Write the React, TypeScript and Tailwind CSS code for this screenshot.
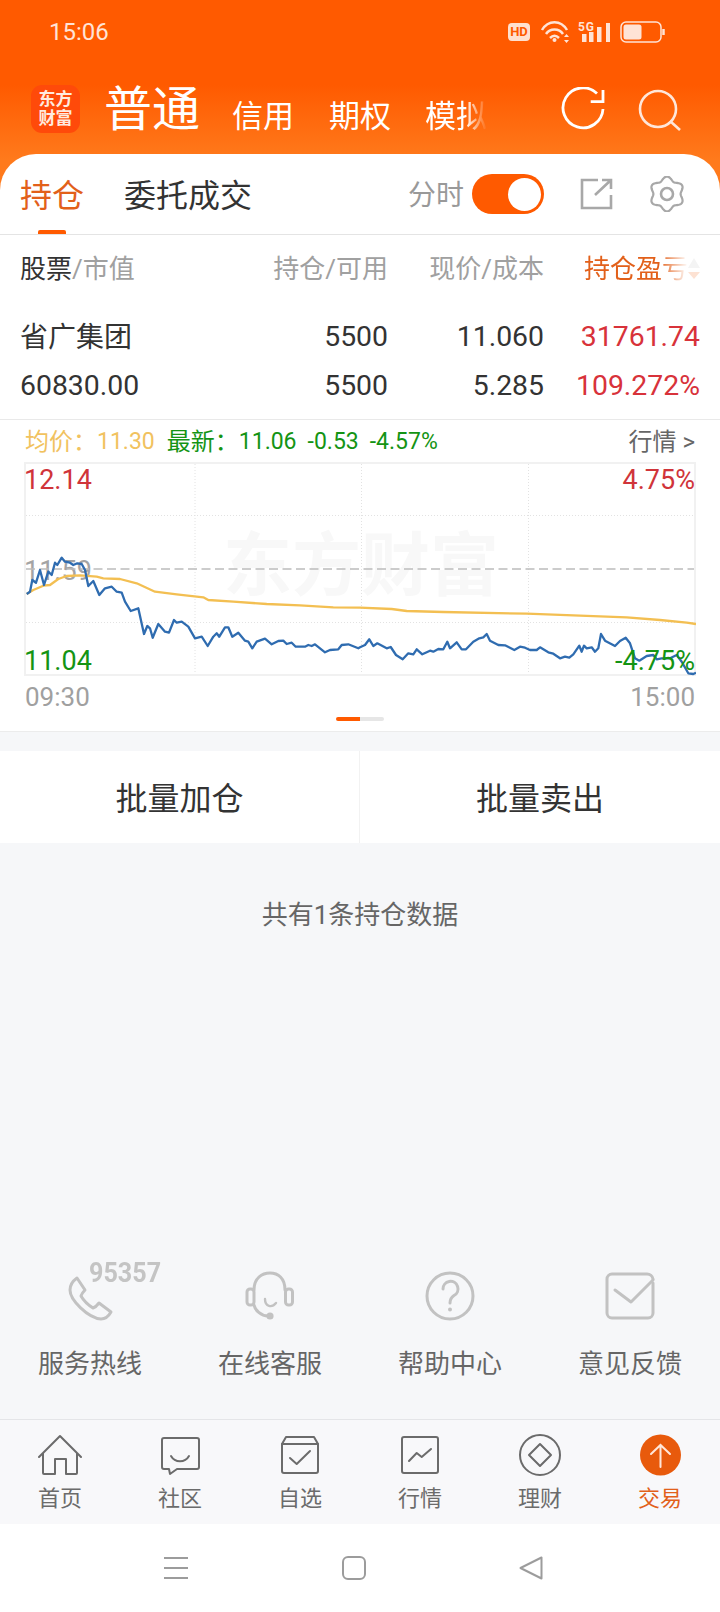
import React from "react";

const blue: number[][] = [[80,552],[90,545],[97,510],[108,518],[120,480],[132,525],[145,485],[155,495],[165,458],[172,465],[185,443],[195,455],[210,458],[220,465],[232,460],[245,462],[255,480],[265,528],[280,513],[298,555],[315,535],[335,530],[350,545],[365,548],[375,575],[392,603],[415,595],[432,672],[442,648],[450,655],[458,683],[475,642],[495,665],[507,668],[522,630],[530,638],[545,635],[565,650],[585,685],[605,680],[623,708],[640,680],[650,670],[658,680],[675,652],[685,652],[697,680],[715,668],[735,692],[745,695],[757,715],[770,695],[795,686],[815,703],[835,693],[850,692],[860,702],[875,698],[887,710],[915,710],[925,705],[935,708],[945,703],[975,727],[990,720],[1015,718],[1025,705],[1045,703],[1075,715],
[1080,712],[1095,705],[1108,688],[1120,708],[1132,700],[1160,715],[1172,711],[1188,735],[1208,748],[1225,730],[1240,733],[1250,718],[1267,733],[1290,722],[1300,725],[1315,717],[1330,718],[1342,695],[1350,715],[1370,697],[1385,718],[1398,718],[1420,695],[1438,685],[1450,682],[1460,672],[1470,692],[1495,705],[1515,706],[1543,720],[1560,710],[1575,713],[1590,720],[1610,720],[1620,712],[1645,727],[1660,731],[1680,745],[1695,740],[1708,743],[1720,733],[1738,707],[1745,725],[1752,707],[1760,715],[1775,712],[1785,725],[1795,715],[1803,672],[1815,692],[1845,708],[1860,693],[1877,683],[1890,700],[1905,745],[1918,752],[1940,738],[1960,735],[1970,748],[1985,745],[2010,745],[2030,735],[2045,755],[2065,790],[2080,792],[2088,788]];

const yellow: number[][] = [[80,552],[100,540],[130,527],[150,525],[175,507],[200,498],[240,496],[290,500],[310,505],[360,507],[410,520],[465,545],[530,553],[610,562],[625,570],[700,575],[800,582],[900,586],[1000,592],[1080,593],[1175,597],[1220,603],[1330,606],[1580,611],[1880,622],[1980,630],[2060,638],[2088,642]];

const toPoints = (list: number[][]) =>
  list.map(([x, y]) => `${(x / 3 - 24).toFixed(1)},${(y / 3 - 52).toFixed(1)}`).join(" ");

const gearPath = () => {
  const pts: string[] = [];
  for (let i = 0; i < 144; i++) {
    const a = (i / 144) * Math.PI * 2;
    const r = 15.5 - 1.9 * Math.cos(6 * a);
    pts.push(`${(18 + r * Math.cos(a)).toFixed(2)} ${(18 + r * Math.sin(a)).toFixed(2)}`);
  }
  return `M${pts.join("L")}Z`;
};

function Chart() {
  return (
    <div className="relative mx-[24px] h-[214px] w-[672px] overflow-hidden shadow-[inset_0_0_0_2px_#f1f1f1]">
      <div className="absolute left-[199px] top-[60px] text-[69px] font-bold leading-[90px] text-[#f8f8f8]">东方财富</div>
      <div className="absolute left-[0px] top-[3px] text-[27px] leading-[30px] text-[#d0343a]">12.14</div>
      <div className="absolute left-[0px] top-[94px] text-[27px] leading-[30px] text-[#a4a4a4]">11.59</div>
      <svg viewBox="0 0 672 214" className="absolute inset-0 h-[214px] w-[672px]" fill="none">
        <g stroke="#e2e2e2" strokeWidth="1" strokeDasharray="1 2">
          <path d="M2 53.5H670M2 160.5H670M171 2V212M337.5 2V212M504.5 2V212" />
        </g>
        <path d="M2 107H670" stroke="#bcbcbc" strokeWidth="1.5" strokeDasharray="9 4.5" />
        <polyline points={toPoints(yellow)} stroke="#f3bf52" strokeWidth="2.3" strokeLinejoin="round" />
        <polyline points={toPoints(blue)} stroke="#2f6cb0" strokeWidth="2.3" strokeLinejoin="round" />
      </svg>
      <div className="absolute left-[0px] top-[184px] text-[27px] leading-[30px] text-[#149414]">11.04</div>
      <div className="absolute right-[1px] top-[3px] text-[27px] leading-[30px] text-[#d0343a]">4.75%</div>
      <div className="absolute right-[1px] top-[184px] text-[27px] leading-[30px] text-[#149414]">-4.75%</div>
    </div>
  );
}

function StatusBar() {
  return (
    <div className="flex h-[64px] items-center pl-[49px] pr-[55px] text-[#ffe3d6]">
      <span className="text-[24px] leading-[30px]">15:06</span>
      <div className="ml-auto flex items-center">
        <div className="flex h-[18px] w-[22px] items-center justify-center rounded-[4px] bg-[#ffe0cf] text-[13px] font-bold leading-[18px] text-[#ff5a00]">HD</div>
        <svg width="32" height="24" viewBox="0 0 32 24" fill="none" className="ml-[10px]" stroke="#ffe3d6" strokeWidth="2.5">
          <path d="M2 10C8 -0.5 21 -0.5 27 10" />
          <path d="M6 14C10 8 19 8 23 14" />
          <path d="M10 18C13 15 16 15 19 18" />
          <circle cx="14.5" cy="20" r="2" fill="#ffe3d6" stroke="none" />
          <path d="M24 17L26.5 14L29 17ZM24 20L26.5 23L29 20Z" fill="#ffe3d6" stroke="none" />
        </svg>
        <svg width="32" height="24" viewBox="0 0 32 24" fill="#ffe3d6" className="ml-[6px]">
          <text x="0" y="11" fontSize="12" fontWeight="700" fontFamily="Roboto" textLength="16">5G</text>
          <rect x="4" y="14" width="4.5" height="8" />
          <rect x="11" y="12" width="4.5" height="10" />
          <rect x="19" y="7" width="4.5" height="15" />
          <rect x="28" y="3" width="4" height="19" />
        </svg>
        <svg width="45" height="22" viewBox="0 0 45 22" fill="none" className="ml-[10px]">
          <rect x="1" y="1" width="40" height="20" rx="5" stroke="#ffe3d6" strokeWidth="1.5" />
          <rect x="3.5" y="3.5" width="18" height="15" rx="2.5" fill="#ffe3d6" />
          <path d="M43.5 8V14" stroke="#ffe3d6" strokeWidth="2.5" />
        </svg>
      </div>
    </div>
  );
}

function HeaderNav() {
  return (
    <div className="flex h-[90px] items-center pl-[31px] pr-[38px] text-white">
      <div className="flex h-[48px] w-[49px] items-center justify-center rounded-[11px] bg-[#ff4a0a] text-center text-[17px] font-bold leading-[19px] text-[#ffeadf]">
        东方<br />财富
      </div>
      <span className="ml-[24px] mt-[2px] text-[48px] leading-[56px]">普通</span>
      <span className="ml-[32px] mt-[16px] text-[31px] leading-[40px]">信用</span>
      <span className="ml-[35px] mt-[16px] text-[31px] leading-[40px]">期权</span>
      <span className="ml-[34px] mt-[16px] text-[31px] leading-[40px] [mask-image:linear-gradient(to_right,black_65%,transparent_100%)]">模拟</span>
      <svg width="44" height="44" viewBox="0 0 44 44" fill="none" stroke="#ffffff" strokeWidth="2.8" className="ml-auto">
        <path d="M36 6.5A20 20 0 1 0 42 22" />
        <path d="M42 3V14.7H29.7" />
      </svg>
      <svg width="44" height="44" viewBox="0 0 44 44" fill="none" stroke="#ffe6d9" strokeWidth="2.6" className="ml-[33px]">
        <circle cx="20" cy="22" r="18" />
        <path d="M32 34L42 43" />
      </svg>
    </div>
  );
}

function TabRow() {
  return (
    <div className="relative flex h-[81px] items-center rounded-t-[36px] border-b border-[#e4e4e4] bg-white pl-[20px] pr-[35px]">
      <span className="mt-[4px] text-[32px] leading-[40px] text-[#e2601a]">持仓</span>
      <span className="ml-[40px] mt-[4px] text-[32px] leading-[40px] text-[#333333]">委托成交</span>
      <span className="ml-auto mt-[4px] text-[28px] leading-[36px] text-[#999999]">分时</span>
      <div className="ml-[8px] flex h-[40px] w-[72px] items-center justify-end rounded-full bg-[#ff5a00] pr-[3px]">
        <div className="h-[33px] w-[33px] rounded-full bg-white" />
      </div>
      <svg width="36" height="36" viewBox="0 0 36 36" fill="none" stroke="#a8a8a8" strokeWidth="2.6" className="ml-[35px]">
        <path d="M19 4H3V32H32V19" />
        <path d="M16 19L32 4M23 4H32V13" />
      </svg>
      <svg width="36" height="36" viewBox="0 0 36 36" fill="none" stroke="#a8a8a8" strokeWidth="2.2" className="ml-[34px]">
        <path d={gearPath()} />
        <circle cx="18" cy="18" r="6" strokeWidth="2.6" />
      </svg>
      <div className="absolute bottom-0 left-[38px] h-[4px] w-[28px] rounded-t-[2px] bg-[#ff5a00]" />
    </div>
  );
}

function Holdings() {
  const row = "grid grid-cols-[208px_160px_156px_156px] items-center";
  return (
    <div className="border-b border-[#e9e9e9] bg-white px-[20px] pb-[9px]">
      <div className={`${row} h-[66px] pt-[2px] text-[26px] leading-[34px] text-[#a0a0a0]`}>
        <div><span className="text-[#333333]">股票</span>/市值</div>
        <div className="text-right">持仓/可用</div>
        <div className="text-right">现价/成本</div>
        <div className="relative pl-[40px]">
          <span className="block w-[104px] text-[#e2601a] [mask-image:linear-gradient(to_right,black_72%,transparent_100%)]">持仓盈亏</span>
          <svg width="12" height="22" viewBox="0 0 12 22" className="absolute right-0 top-[6px]">
            <path d="M6 0L12 10H0Z" fill="#f4f4f4" />
            <path d="M6 21L12 14H0Z" fill="#fde2d3" />
          </svg>
        </div>
      </div>
      <div className={`${row} mt-[11px] h-[49px] text-[28.4px] leading-[36px] text-[#333333]`}>
        <div className="mt-[2px] text-[28px]">省广集团</div>
        <div className="text-right">5500</div>
        <div className="text-right">11.060</div>
        <div className="text-right text-[#d8323a]">31761.74</div>
      </div>
      <div className={`${row} h-[49px] text-[28.4px] leading-[36px] text-[#333333]`}>
        <div>60830.00</div>
        <div className="text-right">5500</div>
        <div className="text-right">5.285</div>
        <div className="text-right text-[#d8323a]">109.272%</div>
      </div>
    </div>
  );
}

function ChartPanel() {
  return (
    <div className="border-b border-[#ececec] bg-white">
      <div className="flex h-[42px] items-center px-[25px] pt-[1px] text-[24px] leading-[30px]">
        <span className="text-[#f1c25f]">均价：</span>
        <span className="text-[23px] text-[#f1c25f]">11.30</span>
        <span className="ml-[12px] text-[#149414]">最新：</span>
        <span className="text-[23px] text-[#149414]">11.06</span>
        <span className="ml-[11px] text-[23px] text-[#149414]">-0.53</span>
        <span className="ml-[11px] text-[23px] text-[#149414]">-4.57%</span>
        <span className="ml-auto text-[#666666]">行情 &gt;</span>
      </div>
      <Chart />
      <div className="flex h-[41px] items-center justify-between px-[25px] text-[26px] leading-[30px] text-[#a0a0a0]">
        <span>09:30</span>
        <span>15:00</span>
      </div>
      <div className="mx-auto flex h-[4px] w-[48px]">
        <div className="w-[24px] rounded-l-full bg-[#ff5a00]" />
        <div className="w-[24px] rounded-r-full bg-[#e6e6e6]" />
      </div>
      <div className="h-[10px]" />
    </div>
  );
}

const svcIcons = {
  phone: (
    <path d="M17 12L25 24Q22 27 21 30Q25 37 33 42Q36 41 39 37L51 46Q47 53 41 53C28 52 10 34 10 24Q10 17 17 12Z" />
  ),
  headset: (
    <>
      <path d="M14 24C14 12 22 7 30 7C38 7 45 12 45 24" />
      <path d="M14 39C15 44 21 50 28 50" />
      <rect x="7" y="23" width="7" height="16" rx="3" />
      <rect x="45.5" y="23" width="7" height="16" rx="3" />
      <path d="M25 33C25 41 32 42 36 37" strokeWidth="2.4" />
      <circle cx="30" cy="50" r="3.6" fill="#c2c2c2" stroke="none" />
    </>
  ),
  help: (
    <>
      <circle cx="30" cy="30" r="23" />
      <path d="M23 23A7.5 7.5 0 1 1 34 29.5C31 31.5 30 33 30 37" />
      <circle cx="30" cy="43.5" r="2" fill="#c2c2c2" stroke="none" />
    </>
  ),
  mail: (
    <>
      <path d="M53 17V47A5 5 0 0 1 48 52H12A5 5 0 0 1 7 47V13A5 5 0 0 1 12 8H47A6 6 0 0 1 53 13" />
      <path d="M15 24L31 36L53 14" />
    </>
  ),
};

function Service() {
  const items: [keyof typeof svcIcons, string][] = [
    ["phone", "服务热线"],
    ["headset", "在线客服"],
    ["help", "帮助中心"],
    ["mail", "意见反馈"],
  ];
  return (
    <div className="mt-auto grid grid-cols-4 pb-[35px]">
      {items.map(([k, label]) => (
        <div key={k} className="relative flex flex-col items-center">
          <svg width="60" height="60" viewBox="0 0 60 60" fill="none" stroke="#c2c2c2" strokeWidth="3" strokeLinejoin="round" strokeLinecap="round">
            {svcIcons[k]}
          </svg>
          {k === "phone" && (
            <span className="absolute left-[89px] top-[-9px] origin-left scale-x-[0.93] text-[27px] font-bold leading-[32px] text-[#c4c4c4]">95357</span>
          )}
          <span className="mt-[18px] text-[26px] leading-[40px] text-[#666666]">{label}</span>
        </div>
      ))}
    </div>
  );
}

const S = "#6b6b6b";
const navIcons: React.ReactNode[] = [
  <g stroke={S} fill="none" strokeWidth="2" strokeLinejoin="round" strokeLinecap="round">
    <path d="M1 23L22 2L43 23M5 19V39A1 1 0 0 0 6 40H17V25H28V40H38A1 1 0 0 0 39 39V19" />
  </g>,
  <g stroke={S} fill="none" strokeWidth="2" strokeLinejoin="round" strokeLinecap="round">
    <path d="M6 4H39A2 2 0 0 1 41 6V33A2 2 0 0 1 39 35H19L12 40L11 35H6A2 2 0 0 1 4 33V6A2 2 0 0 1 6 4Z" />
    <path d="M13 22C17 29 27 29 31 22" />
  </g>,
  <g stroke={S} fill="none" strokeWidth="2" strokeLinejoin="round" strokeLinecap="round">
    <path d="M4 10V37A2 2 0 0 0 6 39H38A2 2 0 0 0 40 37V10L36 3H8Z" />
    <path d="M4 10H40" />
    <path d="M12 24L18.7 30L32 17" />
  </g>,
  <g stroke={S} fill="none" strokeWidth="2" strokeLinejoin="round" strokeLinecap="round">
    <rect x="4" y="3" width="36" height="36" rx="2" />
    <path d="M11 27L18.7 19L23.7 23L33 15" />
  </g>,
  <g stroke={S} fill="none" strokeWidth="2" strokeLinejoin="round">
    <circle cx="22" cy="21" r="20" />
    <path d="M22 10L33 21L22 32L11 21Z" />
  </g>,
  <g>
    <circle cx="22.5" cy="21" r="20.5" fill="#e85a0c" />
    <path d="M22.5 11V33M13 20L22.5 11L32 20" stroke="#ffe6d9" strokeWidth="2" fill="none" strokeLinecap="round" />
  </g>,
];

function BottomNav() {
  const labels = ["首页", "社区", "自选", "行情", "理财", "交易"];
  return (
    <div className="grid h-[105px] grid-cols-6 border-t border-[#e4e5e8] bg-[#f8f8fa] pt-[14px]">
      {labels.map((l, i) => (
        <div key={l} className="flex flex-col items-center">
          <svg width="44" height="44" viewBox="0 0 44 44">{navIcons[i]}</svg>
          <span className={`mt-[6px] text-[22px] leading-[30px] ${i === 5 ? "text-[#e2601a]" : "text-[#6b6b6b]"}`}>{l}</span>
        </div>
      ))}
    </div>
  );
}

function SystemBar() {
  return (
    <div className="flex h-[88px] items-center bg-white pl-[164px]">
      <svg width="24" height="24" viewBox="0 0 24 24" fill="none" stroke="#9c9c9c" strokeWidth="2">
        <path d="M0 2H24M0 12H24M0 22H24" />
      </svg>
      <svg width="24" height="24" viewBox="0 0 24 24" fill="none" stroke="#9c9c9c" strokeWidth="2" className="ml-[154px]">
        <rect x="1" y="1" width="22" height="22" rx="5" />
      </svg>
      <svg width="24" height="24" viewBox="0 0 24 24" fill="none" stroke="#9c9c9c" strokeWidth="2" strokeLinejoin="round" className="ml-[153px]">
        <path d="M22.5 1.5V22.5L1.5 12Z" />
      </svg>
    </div>
  );
}

export default function App() {
  return (
    <div className="flex h-[1612px] w-[720px] flex-col overflow-hidden bg-[#f6f7f9] font-[Roboto,'Noto_Sans_CJK_SC',sans-serif]">
      <div className="bg-[linear-gradient(#ff5a00_0%,#ff5a00_36%,#ff7a1c_68%)]">
        <StatusBar />
        <HeaderNav />
        <TabRow />
      </div>
      <Holdings />
      <ChartPanel />
      <div className="mt-[19px] grid h-[92px] grid-cols-2 bg-white text-[32px] leading-[40px] text-[#333333]">
        <div className="flex items-center justify-center border-r border-[#f2f2f2] pt-[4px]">批量加仓</div>
        <div className="flex items-center justify-center pt-[4px]">批量卖出</div>
      </div>
      <div className="mt-[52px] text-center text-[26px] leading-[40px] text-[#666666]">共有1条持仓数据</div>
      <Service />
      <BottomNav />
      <SystemBar />
    </div>
  );
}
